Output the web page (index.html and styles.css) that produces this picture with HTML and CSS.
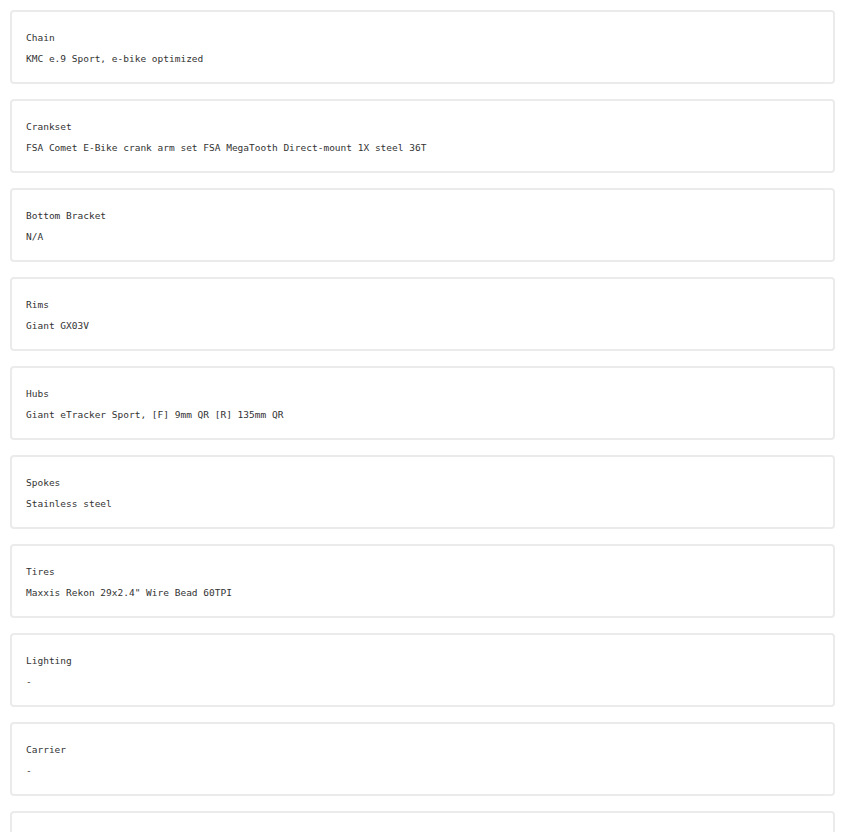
FILE: index.html
```html
<!DOCTYPE html>
<html>
<head>
<meta charset="utf-8">
<link rel="stylesheet" href="styles.css">
</head>
<body>
<div class="list">
  <div class="card"><div class="label">Chain</div><div class="value">KMC e.9 Sport, e-bike optimized</div></div>
  <div class="card"><div class="label">Crankset</div><div class="value">FSA Comet E-Bike crank arm set FSA MegaTooth Direct-mount 1X steel 36T</div></div>
  <div class="card"><div class="label">Bottom Bracket</div><div class="value">N/A</div></div>
  <div class="card"><div class="label">Rims</div><div class="value">Giant GX03V</div></div>
  <div class="card"><div class="label">Hubs</div><div class="value">Giant eTracker Sport, [F] 9mm QR [R] 135mm QR</div></div>
  <div class="card"><div class="label">Spokes</div><div class="value">Stainless steel</div></div>
  <div class="card"><div class="label">Tires</div><div class="value">Maxxis Rekon 29x2.4" Wire Bead 60TPI</div></div>
  <div class="card"><div class="label">Lighting</div><div class="value">-</div></div>
  <div class="card"><div class="label">Carrier</div><div class="value">-</div></div>
  <div class="card"><div class="label">Fenders</div><div class="value">-</div></div>
</div>
</body>
</html>
```
FILE: styles.css
```css
html, body {
  margin: 0;
  padding: 0;
  background: #fff;
}
.list {
  display: flex;
  flex-direction: column;
  gap: 15px;
  padding: 10px 6px 0 10px;
}
.card {
  border: 2px solid #ebebeb;
  border-radius: 4px;
  padding: 18px 14px 15px;
  height: 74px;
  box-sizing: border-box;
  display: flex;
  flex-direction: column;
  gap: 6px;
  font-family: "DejaVu Sans Mono", "Liberation Mono", monospace;
  font-size: 9.5px;
  line-height: 15px;
  color: #333;
}
```
